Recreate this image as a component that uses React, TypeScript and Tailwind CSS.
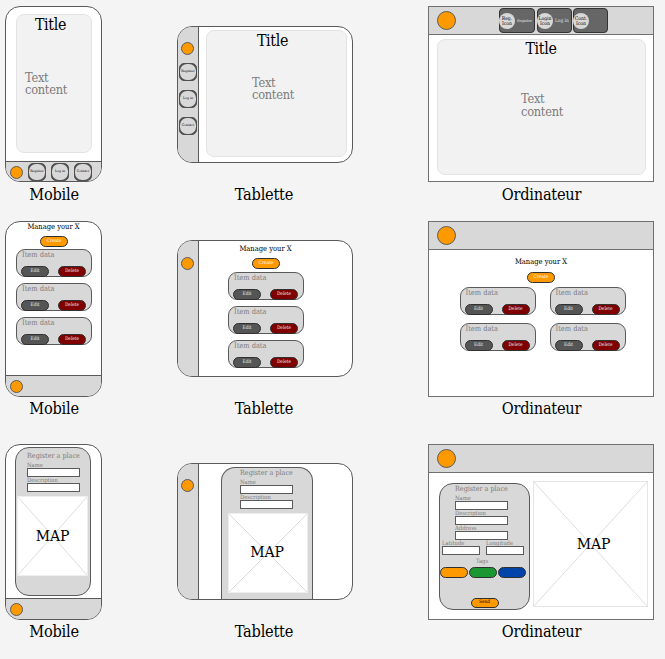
import type { ReactNode } from 'react';

const line = 'border border-[#5a5a5a]';

function Caption({ children, className = '' }: { children: string; className?: string }) {
  return <div className={`pl-px text-center text-[16.2px] leading-5 tracking-[-0.22px] text-black ${className}`}>{children}</div>;
}

function Logo({ className }: { className: string }) {
  return <div className={`shrink-0 rounded-full bg-[#ff9900] ${line} ${className}`} />;
}

function Phone({ children, nav }: { children: ReactNode; nav?: ReactNode }) {
  return (
    <div className={`flex h-44 w-[97px] flex-col overflow-hidden rounded-[15px] bg-white ${line}`}>
      <div className="flex min-h-0 flex-1 flex-col">{children}</div>
      {nav}
    </div>
  );
}

function PhoneNav({ className, children }: { className: string; children?: ReactNode }) {
  return (
    <div className={`flex shrink-0 border-t border-[#5a5a5a] bg-[#d8d8d8] pl-1 ${className}`}>
      <Logo className="mt-[4px] size-[13px]" />
      {children}
    </div>
  );
}

function Tablet({ children, nav, logo = 'mt-[15px]' }: { children: ReactNode; nav?: ReactNode; logo?: string }) {
  return (
    <div className={`flex h-[137px] w-44 overflow-hidden rounded-[15px] bg-white ${line}`}>
      <div className="flex w-[21px] shrink-0 flex-col border-r border-[#5a5a5a] bg-[#d8d8d8]">
        <Logo className={`ml-[3px] size-[13px] ${logo}`} />
        {nav}
      </div>
      <div className="flex min-w-0 flex-1 flex-col">{children}</div>
    </div>
  );
}

function Desktop({ children, nav }: { children: ReactNode; nav?: ReactNode }) {
  return (
    <div className="flex h-44 w-[226px] flex-col border border-[#707070] bg-white">
      <div className="flex h-[28px] shrink-0 border-b border-[#707070] bg-[#d8d8d8] pl-2">
        <Logo className="mt-[4px] size-[19px]" />
        {nav}
      </div>
      <div className="flex min-h-0 flex-1 flex-col">{children}</div>
    </div>
  );
}

function RoundIcon({ label }: { label: string }) {
  return (
    <div className="flex size-[18px] shrink-0 rounded-[5px] border border-[#505050] bg-[#505050]">
      <div className="flex size-4 items-center justify-center rounded-[7px] bg-[#d8d8d8] text-[3.5px] leading-none whitespace-nowrap text-black">
        {label}
      </div>
    </div>
  );
}

function MenuButton({ icon, label, className, size }: { icon: [string, string]; label: string; className: string; size: string }) {
  return (
    <div className={`mt-px flex h-[25px] items-center rounded-[4px] border border-[#333] bg-[#666] ${className}`}>
      <div className="-ml-px flex size-4 shrink-0 flex-col items-center justify-center rounded-full bg-[#d8d8d8] text-[5px] leading-[5px] whitespace-nowrap text-black">
        <span>{icon[0]}</span>
        <span>{icon[1]}</span>
      </div>
      <span className={`ml-[2px] whitespace-nowrap text-[#e0e0e0] ${size}`}>{label}</span>
    </div>
  );
}

function Panel({ className, titleClass, textClass }: { className: string; titleClass: string; textClass: string }) {
  return (
    <div className={`flex flex-col rounded-lg border border-[#e3e3e3] bg-[#f2f2f2] ${className}`}>
      <div className={`text-center text-[15.8px] leading-5 tracking-[-0.3px] text-black ${titleClass}`}>Title</div>
      <div className={`flex flex-col text-[12.7px] leading-[12.5px] tracking-[-0.25px] text-[#7b7b7b] ${textClass}`}>
        <span>Text</span>
        <span>content</span>
      </div>
    </div>
  );
}

function Pill({ className, children }: { className: string; children?: string }) {
  return (
    <div className={`flex h-[10.5px] w-7 shrink-0 items-center justify-center rounded-full border border-[#303030] text-[4.8px] leading-none whitespace-nowrap ${className}`}>
      {children}
    </div>
  );
}

function Item() {
  return (
    <div className={`h-7 w-[76px] shrink-0 rounded-[9px] bg-[#d8d8d8] pl-1 ${line}`}>
      <div className="h-[9px] pl-px text-[7.4px] leading-[9px] whitespace-nowrap text-[#7b7b7b]">Item data</div>
      <div className="mt-[7px] flex gap-[9px]">
        <Pill className="bg-[#555] text-[#eee]">Edit</Pill>
        <Pill className="bg-[#800000] text-[#eee]">Delete</Pill>
      </div>
    </div>
  );
}

function Heading({ className }: { className: string }) {
  return <div className={`h-[10px] text-center text-[7.5px] leading-[10px] whitespace-nowrap text-black ${className}`}>Manage your X</div>;
}

function Field({ label, width = 'w-[53px]' }: { label: string; width?: string }) {
  return (
    <div className="flex h-[15px] flex-col">
      <div className="h-[6px] text-[5.85px] leading-[6px] whitespace-nowrap text-[#7b7b7b]">{label}</div>
      <div className={`h-[9px] shrink-0 bg-white ${line} ${width}`} />
    </div>
  );
}

function FormTitle() {
  return <div className="-mt-px h-[11px] text-[7.15px] leading-[10px] whitespace-nowrap text-[#7b7b7b]">Register a place</div>;
}

function MapBox({ className, labelClass = '', stroke }: { className: string; labelClass?: string; stroke: string }) {
  return (
    <div className={`relative flex shrink-0 items-center justify-center border bg-white ${className}`}>
      <svg className="absolute inset-0 size-full" viewBox="0 0 100 100" preserveAspectRatio="none">
        <path d="M0 0 100 100M100 0 0 100" stroke={stroke} strokeWidth="1" fill="none" vectorEffect="non-scaling-stroke" />
      </svg>
      <span className={`text-[15.6px] leading-5 tracking-[-0.2px] text-black z-10 ${labelClass}`}>MAP</span>
    </div>
  );
}

export default function App() {
  return (
    <div className="h-[659px] w-[665px] overflow-hidden bg-[#f4f4f4] pt-[6px] pl-[5px] font-['DejaVu_Serif_Condensed','DejaVu_Serif',serif] [font-stretch:condensed]">
      <div className="flex h-[215px]">
        <div className="w-[97px]">
          <Phone
            nav={
              <PhoneNav className="h-5">
                <div className="mt-px ml-[5px] flex gap-[5px]">
                  <RoundIcon label="Register" />
                  <RoundIcon label="Log in" />
                  <RoundIcon label="Contact" />
                </div>
              </PhoneNav>
            }
          >
            <Panel className="mt-[7px] ml-[10px] h-[139px] w-[76px]" titleClass="pr-[7px]" textClass="mt-[36.5px] ml-2" />
          </Phone>
          <Caption className="mt-[3px]">Mobile</Caption>
        </div>
        <div className="ml-[75px] w-44 pt-5">
          <Tablet
            nav={
              <div className="mt-[8px] ml-px flex flex-col gap-[9px]">
                <RoundIcon label="Register" />
                <RoundIcon label="Log in" />
                <RoundIcon label="Contact" />
              </div>
            }
          >
            <Panel className="mt-[3px] ml-[7px] h-[127px] w-[141px]" titleClass="pr-[8px]" textClass="mt-[25.5px] ml-[45px]" />
          </Tablet>
          <Caption className="mt-[22px] pr-[3px]">Tablette</Caption>
        </div>
        <div className="ml-[75px] w-[226px]">
          <Desktop
            nav={
              <div className="ml-[43px] flex gap-px">
                <MenuButton icon={['Reg.', 'Icon']} label="Register" size="text-[3.9px]" className="mr-px w-9" />
                <MenuButton icon={['Login', 'Icon']} label="Log in" size="text-[4.8px]" className="w-[35px]" />
                <MenuButton icon={['Cont.', 'Icon']} label="" size="text-[4.8px]" className="w-[35px]" />
              </div>
            }
          >
            <Panel className="mt-[4px] ml-[8px] h-[136px] w-[209px]" titleClass="-mt-px pr-px" textClass="mt-[34px] ml-[83px]" />
          </Desktop>
          <Caption className="mt-[3px]">Ordinateur</Caption>
        </div>
      </div>

      <div className="flex h-[223px]">
        <div className="w-[97px]">
          <Phone nav={<PhoneNav className="h-[21px]" />}>
            <Heading className="" />
            <Pill className="mt-[4px] ml-[34px] bg-[#ff9900] text-white">Create</Pill>
            <div className="mt-[2.5px] ml-[10px] flex flex-col gap-[6px]">
              <Item />
              <Item />
              <Item />
            </div>
          </Phone>
          <Caption className="mt-[2px]">Mobile</Caption>
        </div>
        <div className="ml-[75px] w-44 pt-[19px]">
          <Tablet logo="mt-[16px]">
            <Heading className="mt-[3px] pr-[20px]" />
            <Pill className="mt-[4px] ml-[53px] bg-[#ff9900] text-white">Create</Pill>
            <div className="mt-[3.5px] ml-[29px] flex flex-col gap-[6px]">
              <Item />
              <Item />
              <Item />
            </div>
          </Tablet>
          <Caption className="mt-[22px] pr-[3px]">Tablette</Caption>
        </div>
        <div className="ml-[75px] w-[226px]">
          <Desktop>
            <Heading className="mt-[7px]" />
            <Pill className="mt-[5px] ml-[98px] bg-[#ff9900] text-white">Create</Pill>
            <div className="mt-[4.5px] ml-[30.5px] grid w-[167px] grid-cols-[77px_77px] gap-x-[13px] gap-y-[8px]">
              <Item />
              <Item />
              <Item />
              <Item />
            </div>
          </Desktop>
          <Caption className="mt-[2px]">Ordinateur</Caption>
        </div>
      </div>

      <div className="flex">
        <div className="w-[97px]">
          <Phone nav={<PhoneNav className="h-[21px]" />}>
            <div className={`mt-[2px] ml-[9px] flex h-[149px] w-[76px] flex-col rounded-[14px] bg-[#d8d8d8] pt-[4px] ${line}`}>
              <div className="pl-[11px]">
                <FormTitle />
                <Field label="Name" />
                <Field label="Description" />
              </div>
              <MapBox className="mt-[4px] ml-px h-[80px] w-[71px] border-[#eeeeee]" labelClass="pb-px" stroke="#dddddd" />
            </div>
          </Phone>
          <Caption className="mt-[2px]">Mobile</Caption>
        </div>
        <div className="ml-[75px] w-44 pt-[19px]">
          <Tablet>
            <div className="mt-[3px] ml-[22px] flex h-[132px] w-[92px] flex-col rounded-t-[14px] border border-b-0 border-[#5a5a5a] bg-[#d8d8d8]">
              <div className="pt-px pl-[18px]">
                <FormTitle />
                <Field label="Name" />
                <Field label="Description" />
              </div>
              <MapBox className="mt-[4px] ml-[6px] h-[80px] w-[80px] border-[#eeeeee]" labelClass="pr-[2px] pb-[2px]" stroke="#dddddd" />
            </div>
          </Tablet>
          <Caption className="mt-[22px] pr-[3px]">Tablette</Caption>
        </div>
        <div className="ml-[75px] w-[226px]">
          <Desktop>
            <div className="flex">
              <div className={`mt-[10px] ml-[10px] h-[127px] w-[91px] rounded-[14px] bg-[#d8d8d8] ${line}`}>
                <div className="pt-px pl-[15px]">
                  <FormTitle />
                  <Field label="Name" />
                  <Field label="Description" />
                  <Field label="Address" />
                </div>
                <div className="flex gap-[6px] pl-[2px]">
                  <Field label="Latitude" width="w-[38px]" />
                  <Field label="Longitude" width="w-[38px]" />
                </div>
                <div className="mt-[3px] h-[7px] pr-[5px] text-center text-[5.85px] leading-[7px] text-[#7b7b7b]">Tags</div>
                <div className="mt-[2px] flex gap-px">
                  <Pill className="bg-[#ff9900]" />
                  <Pill className="bg-[#1a9632]" />
                  <Pill className="bg-[#0044aa]" />
                </div>
                <Pill className="mt-[20px] ml-[30.5px] bg-[#ff9900] text-black">Send</Pill>
              </div>
              <MapBox className="mt-[8px] ml-[3px] h-[126px] w-[115px] border-[#e5e5e5]" labelClass="pl-[6px] pb-px" stroke="#dddddd" />
            </div>
          </Desktop>
          <Caption className="mt-[2px]">Ordinateur</Caption>
        </div>
      </div>
    </div>
  );
}
